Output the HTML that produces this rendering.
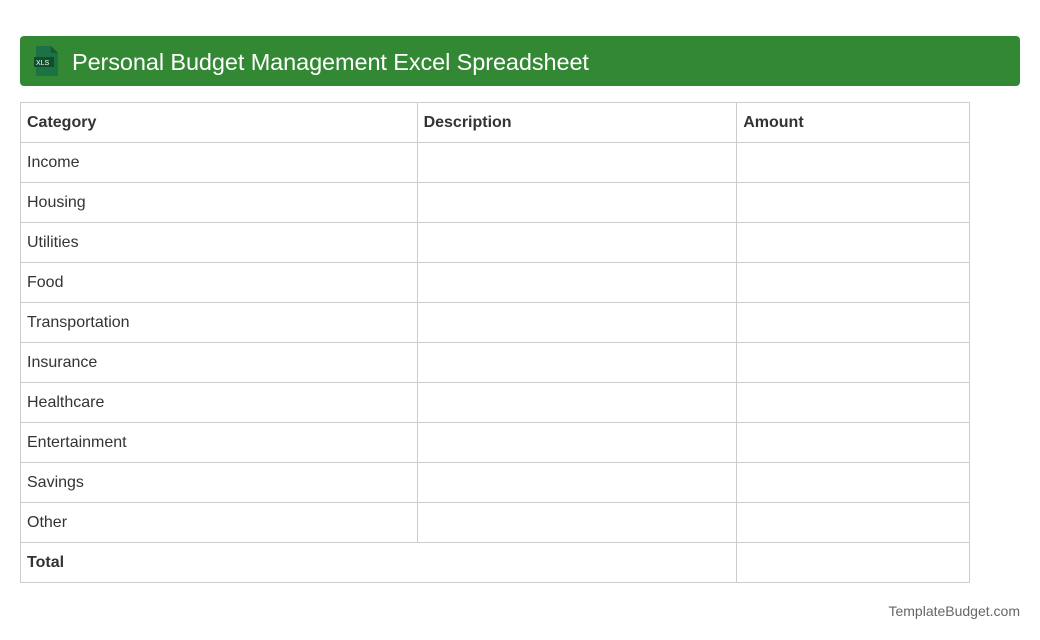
<!DOCTYPE html>
<html><head><meta charset="utf-8"><style>
body{margin:0;width:1040px;height:640px;background:#fff;font-family:"Liberation Sans",sans-serif;position:relative;overflow:hidden}
.hdr{position:absolute;left:20px;top:36px;width:1000px;height:50px;background:#338833;border-radius:4px}
.hdr .t{position:absolute;left:52px;top:11px;color:#fff;font-size:23.5px;line-height:30px;letter-spacing:-0.1px}
table{position:absolute;left:20px;top:102px;width:950px;border-collapse:collapse;font-size:16px;color:#333}
td{border:1px solid #ccc;height:39px;padding:0 0 0 6px;box-sizing:border-box}
tr{height:40px}
.b{font-weight:bold}
.ft{position:absolute;right:20px;top:603px;font-size:14px;color:#666}
</style></head><body>
<div class="hdr">
<svg style="position:absolute;left:14px;top:9px" width="26" height="32" viewBox="0 0 26 32">
<path d="M3 1h14l7 7v22a1 1 0 0 1-1 1H3a1 1 0 0 1-1-1V2a1 1 0 0 1 1-1z" fill="#1e7145"/>
<path d="M17 1v7h7z" fill="#155c36"/>
<rect x="0" y="12" width="20" height="10" fill="#0f4f2c"/>
<text x="2" y="20" font-size="7" fill="#fff" font-family="Liberation Sans">XLS</text>
</svg>
<div class="t">Personal Budget Management Excel Spreadsheet</div>
</div>
<table>
<colgroup><col style="width:397px"><col style="width:320px"><col style="width:233px"></colgroup>
<tr class="b"><td>Category</td><td>Description</td><td>Amount</td></tr>
<tr><td>Income</td><td></td><td></td></tr>
<tr><td>Housing</td><td></td><td></td></tr>
<tr><td>Utilities</td><td></td><td></td></tr>
<tr><td>Food</td><td></td><td></td></tr>
<tr><td>Transportation</td><td></td><td></td></tr>
<tr><td>Insurance</td><td></td><td></td></tr>
<tr><td>Healthcare</td><td></td><td></td></tr>
<tr><td>Entertainment</td><td></td><td></td></tr>
<tr><td>Savings</td><td></td><td></td></tr>
<tr><td>Other</td><td></td><td></td></tr>
<tr class="b"><td colspan="2">Total</td><td></td></tr>
</table>
<div class="ft">TemplateBudget.com</div>
</body></html>
